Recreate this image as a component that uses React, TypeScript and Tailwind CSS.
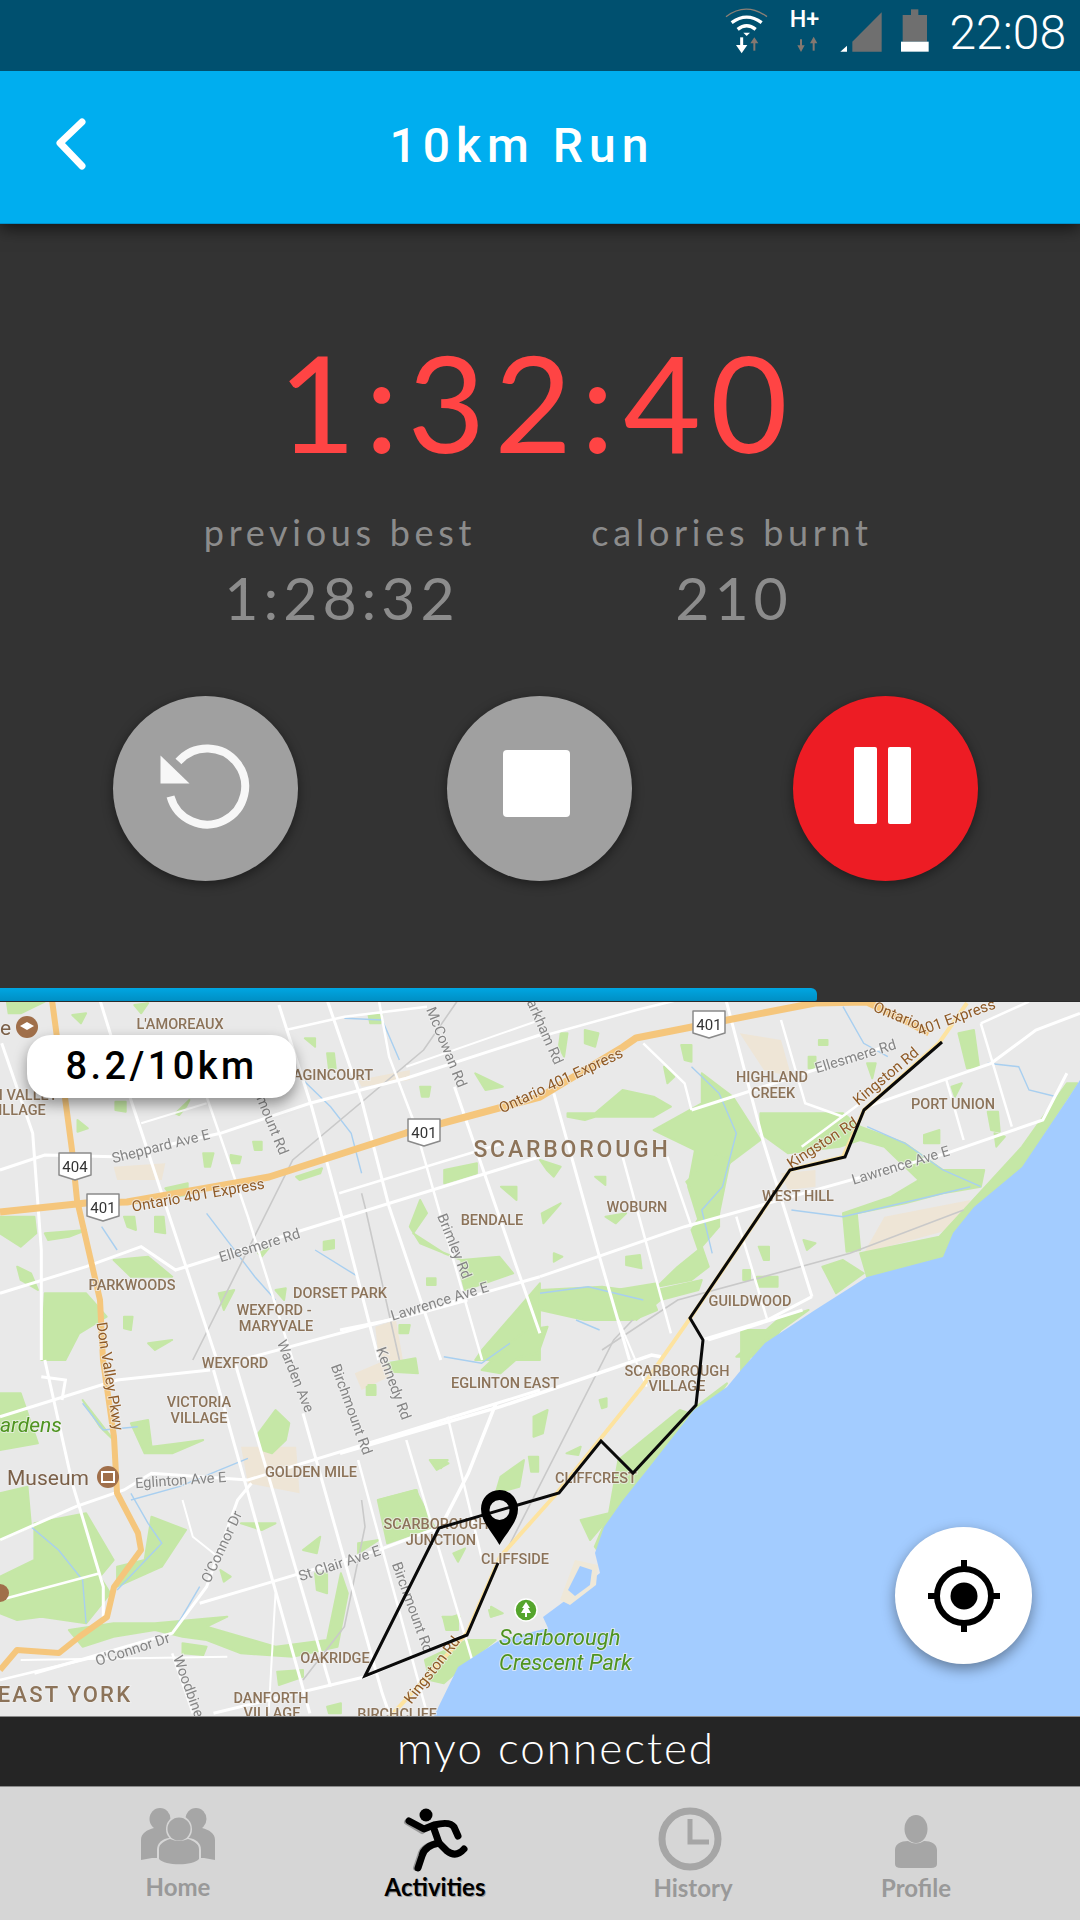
import React from "react";

type P = [number, number];
type Z = { ox: number; oy: number; sx: number };
const Z4: Z = { ox: 0, oy: 1000, sx: 2.904 };
const Z5: Z = { ox: 340, oy: 1300, sx: 2.119 };
const Z6: Z = { ox: 0, oy: 1360, sx: 2.904 };
const Z7: Z = { ox: 540, oy: 1000, sx: 2.904 };
const pts = (z: Z, a: P[]) => a.map(([x, y]) => `${(z.ox + x / z.sx).toFixed(1)},${(z.oy + y / 3).toFixed(1)}`).join(" ");

const greens: [Z, P[]][] = ([
  [Z4, [[20,5],[130,5],[60,40],[25,40]]],
  [Z4, [[210,45],[250,40],[235,70]]],
  [Z4, [[390,15],[430,10],[410,40]]],
  [Z4, [[885,115],[915,115],[915,140]]],
  [Z4, [[950,160],[970,160],[975,205],[955,205]]],
  [Z4, [[1070,45],[1110,45],[1105,70],[1075,70]]],
  [Z4, [[335,305],[365,305],[365,335],[335,330]]],
  [Z4, [[510,340],[550,300],[540,320],[520,345]]],
  [Z4, [[225,360],[255,385],[225,395]]],
  [Z4, [[590,460],[620,460],[610,500],[595,500]]],
  [Z4, [[670,465],[700,470],[695,490],[670,490]]],
  [Z4, [[735,425],[760,425],[760,450],[740,450]]],
  [Z4, [[860,530],[935,505],[930,520],[870,540]]],
  [Z4, [[480,565],[545,550],[545,585],[500,590]]],
  [Z4, [[360,650],[390,650],[395,690],[370,680]]],
  [Z4, [[450,650],[475,650],[480,700],[450,695]]],
  [Z4, [[1290,510],[1385,490],[1385,520],[1290,550]]],
  [Z4, [[1220,260],[1250,260],[1245,290],[1225,290]]],
  [Z4, [[1380,220],[1460,260],[1410,270]]],
  [Z4, [[1455,560],[1500,560],[1500,600]]],
  [Z4, [[940,725],[970,720],[970,745],[940,750]]],
  [Z4, [[750,760],[780,745],[760,770]]],
  [Z4, [[1240,835],[1265,835],[1265,855],[1240,855]]],
  [Z4, [[1340,780],[1450,770],[1490,820],[1350,870],[1340,830]]],
  [Z4, [[1220,600],[1240,640],[1200,700],[1290,760],[1340,780],[1220,730],[1190,680]]],
  [Z4, [[0,650],[100,650],[105,700],[60,740],[0,700]]],
  [Z4, [[130,700],[250,690],[200,710],[140,720]]],
  [Z4, [[50,800],[90,820],[110,870],[60,840]]],
  [Z4, [[130,880],[250,880],[310,950],[230,1000],[190,1080],[120,1080]]],
  [Z4, [[360,950],[385,950],[380,990],[360,985]]],
  [Z4, [[430,1030],[500,1020],[450,1050]]],
  [Z4, [[635,880],[680,870],[650,930]]],
  [Z4, [[800,870],[830,865],[825,900]]],
  [Z4, [[330,780],[430,770],[500,830],[380,830]]],
  [Z4, [[1160,975],[1190,975],[1185,1000],[1160,1000]]],
  [Z4, [[1400,1050],[1568,850],[1568,1080],[1380,1080]]],
  [Z7, [[0,870],[180,860],[320,880],[340,930],[270,960],[130,960],[0,930]]],
  [Z7, [[470,220],[560,290],[640,420],[550,490],[520,640],[460,660],[430,560],[450,450],[330,390],[470,310]]],
  [Z7, [[130,90],[170,100],[160,140],[130,130]]],
  [Z7, [[60,100],[80,100],[70,170],[55,140]]],
  [Z7, [[410,135],[440,135],[440,185],[420,180]]],
  [Z7, [[360,200],[390,230],[370,250]]],
  [Z7, [[80,340],[160,340],[240,270],[330,290],[380,320],[330,350],[160,350],[130,360],[80,350]]],
  [Z7, [[190,650],[250,640],[220,670]]],
  [Z7, [[5,640],[60,610],[10,670]]],
  [Z7, [[0,480],[60,500],[40,530],[20,510]]],
  [Z7, [[160,530],[190,530],[190,555]]],
  [Z7, [[810,120],[835,120],[835,135],[810,135]]],
  [Z7, [[780,170],[800,170],[800,205],[780,205]]],
  [Z7, [[950,190],[975,190],[965,235]]],
  [Z7, [[1215,100],[1260,90],[1275,200],[1240,205]]],
  [Z7, [[1300,335],[1330,335],[1335,395],[1310,390]]],
  [Z7, [[1195,260],[1225,250],[1205,290]]],
  [Z7, [[1320,400],[1350,410],[1325,440]]],
  [Z7, [[1115,405],[1160,390],[1160,430],[1115,430]]],
  [Z7, [[640,340],[880,340],[930,380],[1060,430],[1170,510],[1290,510],[1280,560],[1170,580],[1060,610],[920,640],[930,750],[890,755],[880,640],[1020,590],[1100,540],[1000,440],[930,420],[870,440],[720,460],[640,400]]],
  [Z7, [[930,760],[1160,710],[1240,620],[1400,440],[1530,250],[1560,250],[1400,500],[1260,620],[1200,700],[1170,770],[950,830]]],
  [Z7, [[570,1070],[690,960],[780,930],[700,990],[640,1070]]],
  [Z7, [[220,870],[340,850],[350,900],[280,960],[230,930]]],
  [Z7, [[340,870],[470,840],[460,870],[350,900]]],
  [Z7, [[590,810],[610,810],[610,840],[590,840]]],
  [Z7, [[630,830],[690,830],[690,860],[630,860]]],
  [Z7, [[635,740],[665,740],[665,780],[650,780]]],
  [Z7, [[765,720],[800,730],[775,750]]],
  [Z7, [[250,770],[290,765],[295,805],[250,795]]],
  [Z7, [[40,760],[65,770],[40,785]]],
  [Z7, [[425,545],[520,460],[555,480],[520,560],[520,680],[470,740],[490,800],[440,840],[340,860],[400,800],[460,750],[440,690],[470,640],[450,590]]],
  [Z7, [[820,800],[880,780],[940,820],[860,880]]],
  [Z5, [[850,90],[920,90],[870,170],[850,220]]],
  [Z5, [[745,330],[820,250],[790,310],[740,350]]],
  [Z5, [[395,90],[440,80],[420,160],[380,170],[340,220],[300,210],[360,130]]],
  [Z5, [[410,350],[440,330],[430,400],[410,410]]],
  [Z5, [[340,530],[390,480],[380,560],[330,580]]],
  [Z5, [[80,600],[160,570],[200,680],[100,730]]],
  [Z5, [[510,660],[570,640],[560,670],[530,720]]],
  [Z5, [[220,960],[250,945],[250,990],[225,990]]],
  [Z5, [[190,480],[230,490],[205,510]]],
  [Z5, [[400,470],[420,470],[420,515],[405,515]]],
  [Z5, [[480,460],[510,440],[505,465]]],
  [Z5, [[60,255],[75,255],[75,285],[60,285]]],
  [Z5, [[100,190],[160,175],[165,220],[110,215]]],
  [Z5, [[550,300],[565,295],[565,320],[555,325]]],
  [Z5, [[240,760],[265,745],[250,785]]],
  [Z5, [[320,920],[345,940],[320,950]]],
  [Z5, [[180,1080],[270,1020],[330,1020],[260,1100],[220,1150],[190,1140]]],
  [Z5, [[590,480],[720,330],[750,345],[650,510],[600,620],[550,760],[540,740],[570,640]]],
  [Z6, [[380,190],[430,180],[440,260],[520,250],[590,240],[500,280],[420,280]]],
  [Z6, [[750,220],[800,150],[840,190],[830,240],[790,280],[760,270]]],
  [Z6, [[100,490],[250,460],[330,600],[290,650],[320,700],[250,790],[120,770],[50,780],[0,760],[0,650],[100,600]]],
  [Z6, [[0,400],[80,380],[90,500],[0,540]]],
  [Z6, [[440,470],[540,510],[470,620],[340,680],[340,620],[420,600]]],
  [Z6, [[200,810],[330,790],[450,790],[660,770],[600,800],[700,830],[800,860],[950,840],[990,640],[1010,700],[980,860],[850,890],[700,880],[600,840],[530,830],[450,810],[330,830],[240,860]]],
  [Z6, [[530,850],[600,860],[590,885],[530,880]]],
  [Z6, [[805,935],[880,930],[880,950],[810,975]]],
  [Z6, [[1100,420],[1210,390],[1230,490],[1130,540]]],
  [Z6, [[880,570],[930,530],[920,580]]],
  [Z6, [[1040,550],[1100,540],[1040,580]]],
  [Z6, [[915,640],[950,640],[950,700],[920,690]]],
  [Z6, [[1285,770],[1335,770],[1300,805]]],
  [Z6, [[1250,300],[1300,300],[1280,325]]],
  [Z6, [[950,1040],[990,1030],[990,1060],[955,1060]]],
  [Z6, [[1065,80],[1090,80],[1090,105],[1065,105]]],
  [Z6, [[1420,750],[1455,760],[1425,770]]],
  [Z6, [[0,100],[60,100],[110,250],[0,270]]],
  [Z6, [[240,120],[330,240],[290,200]]],
  [Z6, [[640,630],[670,650],[650,665]]],
  [Z6, [[700,490],[800,490],[760,510]]],
] as [Z, P[]][]);

const tans: [Z, P[]][] = [
  [Z4, [[330,500],[480,490],[470,540],[340,540]]],
  [Z6, [[700,260],[860,260],[870,400],[720,370]]],
  [Z7, [[580,100],[700,120],[730,230],[650,210]]],
  [Z7, [[700,520],[800,510],[800,560],[720,570]]],
  [Z4, [[1040,240],[1190,210],[1190,240],[1050,260]]],
  [Z4, [[1090,980],[1150,960],[1170,1080],[1100,1080]]],
  [Z6, [[1030,40],[1120,0],[1130,50],[1050,90]]],
  [Z7, [[1000,650],[1250,600],[1220,680],[940,760]]],
];

const roads: [Z, P[], number][] = [
  [Z4, [[290,0],[380,300],[540,800],[630,1080]], 3],
  [Z4, [[600,290],[720,650],[850,1080]], 2.5],
  [Z4, [[810,15],[905,320],[990,640],[1100,1080]], 3],
  [Z4, [[950,0],[1050,300],[1130,620],[1280,1080]], 3],
  [Z4, [[1100,0],[1130,170],[1200,360],[1400,1080]], 2.5],
  [Z4, [[1320,260],[1400,500],[1500,800],[1568,1000]], 3],
  [Z4, [[5,130],[95,400],[120,750],[120,1080]], 3],
  [Z4, [[0,510],[130,465],[330,470]], 3],
  [Z4, [[330,470],[640,400],[900,310],[1180,235],[1568,105]], 3],
  [Z4, [[830,90],[1000,50],[1240,20]], 2.5],
  [Z4, [[0,880],[250,800],[410,740],[510,810],[880,690],[1568,470]], 3],
  [Z4, [[985,580],[1110,540],[1460,430]], 2.5],
  [Z4, [[700,1080],[1130,960],[1568,830]], 3],
  [Z4, [[410,370],[600,310]], 2],
  [Z4, [[1180,200],[1568,60]], 2],
  [Z6, [[0,170],[340,60],[610,30]], 3],
  [Z6, [[0,540],[220,440],[360,390],[440,340],[720,360],[1100,240],[1568,90]], 3],
  [Z6, [[580,730],[1100,570],[1280,500]], 3],
  [Z6, [[100,940],[500,820],[600,680],[690,420],[730,370]], 3],
  [Z6, [[0,960],[280,890]], 2.5],
  [Z6, [[60,900],[660,890]], 2],
  [Z6, [[620,1060],[1060,950],[1360,820]], 3],
  [Z6, [[0,720],[290,640]], 2.5],
  [Z6, [[130,0],[210,370],[300,680],[300,780]], 3],
  [Z6, [[620,30],[900,1060]], 3],
  [Z6, [[680,0],[960,980]], 3],
  [Z6, [[880,160],[1110,1000],[1130,1060]], 3],
  [Z6, [[1040,300],[1240,1060]], 2.5],
  [Z6, [[1180,240],[1400,1000]], 2.5],
  [Z6, [[1300,170],[1400,600]], 2.5],
  [Z6, [[1440,130],[1360,340],[1280,500]], 3.5],
  [Z6, [[530,420],[560,530],[620,580],[640,600]], 2],
  [Z6, [[500,880],[560,1060]], 2.5],
  [Z6, [[800,700],[780,1060]], 2],
  [Z6, [[120,50],[190,60],[180,120]], 3],
  [Z7, [[40,280],[170,760],[260,1080]], 3],
  [Z7, [[240,470],[380,1000]], 2.5],
  [Z7, [[370,470],[440,680]], 2.5],
  [Z7, [[540,0],[650,430],[790,890]], 3],
  [Z7, [[700,60],[770,310],[880,350]], 2.5],
  [Z7, [[1180,240],[1230,420]], 2.5],
  [Z7, [[1280,70],[1370,380]], 2.5],
  [Z7, [[570,650],[660,960]], 2.5],
  [Z7, [[0,830],[420,680],[1180,460],[1460,360],[1530,220]], 3],
  [Z7, [[440,330],[620,270],[1030,130]], 3],
  [Z7, [[0,110],[280,30],[400,0]], 2.5],
  [Z7, [[760,440],[930,310]], 2.5],
  [Z7, [[950,320],[1310,190],[1440,90],[1568,40]], 3],
  [Z7, [[300,130],[420,250],[440,330]], 2.5],
  [Z7, [[470,1020],[660,960],[790,890]], 3],
  [Z7, [[1280,70],[1420,5]], 2.5],
  [Z5, [[0,460],[340,320],[660,165],[680,170]], 3.5],
  [Z5, [[780,120],[980,30]], 3],
  [Z5, [[590,60],[650,260]], 2],
  [Z5, [[0,90],[140,50],[270,0]], 3],
];

const rails: [Z, P[]][] = [
  [Z4, [[1050,580],[1060,620],[1160,1080]]],
  [Z4, [[1330,0],[1230,150],[850,480],[560,1080]]],
  [Z7, [[180,1050],[400,900],[900,760],[1230,630]]],
  [Z6, [[1050,420],[1060,500],[1000,800],[880,960]]],
  [Z5, [[350,760],[580,120],[620,60]]],
];

const creeks: [Z, P[]][] = [
  [Z4, [[880,240],[960,320],[1020,400],[1050,520]]],
  [Z4, [[295,680],[340,750]]],
  [Z4, [[600,640],[740,830],[800,900]]],
  [Z4, [[915,750],[1040,830]]],
  [Z4, [[1000,55],[1110,60],[1160,180]]],
  [Z7, [[950,380],[1060,430],[1170,510],[1280,560]]],
  [Z7, [[440,200],[520,280],[570,400],[530,560],[470,630],[500,760]]],
  [Z7, [[1300,190],[1390,200],[1420,270],[1500,290]]],
  [Z7, [[730,630],[880,650],[1130,590],[1250,560]]],
  [Z7, [[880,20],[940,130],[1010,170]]],
  [Z7, [[0,880],[140,860],[300,900]]],
  [Z6, [[90,500],[170,570],[240,660],[250,790]]],
  [Z6, [[380,400],[430,490],[470,550],[340,690]]],
  [Z6, [[380,420],[520,380],[720,295]]],
  [Z6, [[500,820],[580,680]]],
  [Z6, [[240,130],[300,210],[400,200]]],
  [Z5, [[220,170],[300,190],[360,130]]],
  [Z5, [[500,60],[550,90]]],
];

const coast = "1080,1080 1067,1100 1022,1167 974,1207 953,1233 943,1257 867,1277 815,1310 765,1343 741,1370 727,1387 694,1410 647,1470 623,1500 604,1527 595,1553 600,1573 566,1600 543,1617 548,1628 500,1640 458,1667 434,1716 1080,1716";

type L = [string, number, number, number?];
const places: L[] = [
  ["L'AMOREAUX", 180, 1029], ["AGINCOURT", 333, 1080], ["N VALLEY", 25, 1100], ["ILLAGE", 22, 1115],
  ["BENDALE", 492, 1225], ["WOBURN", 637, 1212], ["HIGHLAND", 772, 1082], ["CREEK", 773, 1098],
  ["PORT UNION", 953, 1109], ["WEST HILL", 798, 1201], ["GUILDWOOD", 750, 1306], ["PARKWOODS", 132, 1290],
  ["DORSET PARK", 340, 1298], ["WEXFORD -", 274, 1315], ["MARYVALE", 276, 1331], ["WEXFORD", 235, 1368],
  ["VICTORIA", 199, 1407], ["VILLAGE", 199, 1423], ["EGLINTON EAST", 505, 1388], ["SCARBOROUGH", 677, 1376],
  ["VILLAGE", 677, 1391], ["GOLDEN MILE", 311, 1477], ["CLIFFCREST", 596, 1483], ["SCARBOROUGH", 436, 1529],
  ["JUNCTION", 441, 1545], ["CLIFFSIDE", 515, 1564], ["OAKRIDGE", 335, 1663], ["DANFORTH", 271, 1703],
  ["VILLAGE", 272, 1718], ["BIRCHCLIFF", 397, 1719],
];
const grey: L[] = [
  ["Sheppard Ave E", 162, 1151, -14], ["McCowan Rd", 442, 1049, 68], ["Markham Rd", 538, 1028, 66],
  ["mount Rd", 268, 1127, 68], ["Ellesmere Rd", 261, 1250, -17], ["Brimley Rd", 450, 1248, 68],
  ["Lawrence Ave E", 441, 1306, -17], ["Ellesmere Rd", 857, 1061, -17], ["Lawrence Ave E", 902, 1170, -17],
  ["Warden Ave", 291, 1378, 68], ["Birchmount Rd", 347, 1411, 70], ["Kennedy Rd", 389, 1385, 70],
  ["Eglinton Ave E", 181, 1485, -4], ["O'Connor Dr", 226, 1549, -65], ["O'Connor Dr", 134, 1654, -18],
  ["Woodbine", 184, 1688, 70], ["St Clair Ave E", 341, 1568, -18], ["Birchmount Rd", 408, 1609, 70],
];
const brownRoad: L[] = [
  ["Ontario 401 Express", 199, 1200, -10], ["Ontario 401 Express", 563, 1085, -25], ["Don Valley Pkwy", 105, 1377, 81],
  ["Kingston Rd", 436, 1673, -52], ["Kingston Rd", 889, 1080, -40], ["Kingston Rd", 825, 1147, -33],
  ["Ontario", 895, 1020, 22], ["401 Express", 958, 1022, -20],
];
const shields: [string, number, number][] = [["401", 424, 1132], ["401", 103, 1207], ["404", 75, 1166], ["401", 709, 1024]];

function MapArt() {
  return (
    <svg className="block w-[1080px] h-[714px]" viewBox="0 1002 1080 714">
      <rect x="0" y="1002" width="1080" height="714" fill="#e9e9e9" />
      <g className="blur-[0.5px]">
        {tans.map(([z, a], i) => <polygon key={i} points={pts(z, a)} fill="#eee5d6" />)}
        {greens.map(([z, a], i) => <polygon key={i} points={pts(z, a)} fill="#c5e7a6" stroke="#c5e7a6" strokeWidth="2" strokeLinejoin="round" />)}
        {creeks.map(([z, a], i) => <polyline key={i} points={pts(z, a)} fill="none" stroke="#a8cff0" strokeWidth="1.4" />)}
        {rails.map(([z, a], i) => <polyline key={i} points={pts(z, a)} fill="none" stroke="#c9c9c9" strokeWidth="1.6" />)}
        {roads.map(([z, a, w], i) => <polyline key={i} points={pts(z, a)} fill="none" stroke="#ffffff" strokeWidth={w} />)}
        <polygon points={coast} fill="#a3ccff" />
        <polygon points="560,1600 575,1560 598,1565 596,1585 570,1605" fill="#efe8d8" />
        <polygon points="568,1590 580,1566 592,1570 590,1585 575,1596" fill="#a3ccff" />
        <polyline points="0,1212 86,1203 127,1202 269,1177 406,1133 499,1108 540,1097 623,1047 636,1038 712,1023 815,1003 867,1002 884,1010 929,1033" fill="none" stroke="#f5c67c" strokeWidth="7" strokeLinejoin="round" />
        <polyline points="52,1000 72,1150 77,1200 100,1300 103,1360 114,1437 117,1493 138,1533 141,1550 114,1587 107,1617 79,1637 59,1653 17,1650 0,1670" fill="none" stroke="#f5c67c" strokeWidth="6" strokeLinejoin="round" />
        <polyline points="967,1003 939,1043 864,1110 843,1157 790,1170 691,1317 642,1387 557,1493 500,1557 467,1633 387,1720" fill="none" stroke="#fde3a0" strokeWidth="4" strokeLinejoin="round" />
        {shields.map(([t, x, y], i) => (
          <g key={i}>
            <path d={`M${x - 16} ${y - 13}h32v22l-16 5l-16 -5z`} fill="#fff" stroke="#8a8a8a" strokeWidth="1.5" strokeLinejoin="round" />
            <text x={x} y={y + 6} textAnchor="middle" fontSize="15" fontFamily="Roboto, sans-serif" fill="#333">{t}</text>
          </g>
        ))}
        <g fontFamily="Roboto, sans-serif" style={{ paintOrder: "stroke" }} stroke="#f0f0f0" strokeWidth="2" strokeOpacity="0.7">
          {places.map(([t, x, y], i) => <text key={i} x={x} y={y} textAnchor="middle" fontSize="14.5" fontWeight="500" fill="#8c7359">{t}</text>)}
          <text x="572" y="1157" textAnchor="middle" fontSize="23" fontWeight="500" letterSpacing="2.8" fill="#8c7359">SCARBOROUGH</text>
          <text x="65" y="1702" textAnchor="middle" fontSize="22" fontWeight="500" letterSpacing="2.2" fill="#8c7359">EAST YORK</text>
          <text x="7" y="1485" fontSize="21" fill="#7b6048">Museum</text>
          <text x="0" y="1432" fontSize="21" fontStyle="italic" fill="#4f9420">ardens</text>
          <text x="0" y="1035" fontSize="21" fill="#7b6048">e</text>
          <text x="499" y="1645" fontSize="22" fontStyle="italic" fill="#4f9420">Scarborough</text>
          <text x="499" y="1670" fontSize="22" fontStyle="italic" fill="#4f9420">Crescent Park</text>
          {grey.map(([t, x, y, r], i) => <text key={i} x={x} y={y} transform={`rotate(${r} ${x} ${y})`} textAnchor="middle" fontSize="14.5" fill="#858585">{t}</text>)}
          {brownRoad.map(([t, x, y, r], i) => <text key={i} x={x} y={y} transform={`rotate(${r} ${x} ${y})`} textAnchor="middle" fontSize="15" fill="#8f5a26">{t}</text>)}
        </g>
        <circle cx="27" cy="1027" r="11" fill="#a06f4a" />
        <path d="M20 1026l7-4l7 4l-7 4z" fill="#fff" />
        <circle cx="108" cy="1477" r="11" fill="#a06f4a" />
        <rect x="102" y="1472" width="12" height="10" fill="none" stroke="#fff" strokeWidth="2" />
        <circle cx="0" cy="1593" r="9" fill="#a06f4a" />
        <circle cx="526" cy="1610" r="11" fill="#55a52c" stroke="#fff" strokeWidth="1.5" />
        <path d="M526 1602l4 6h-2l3 5h-4v4h-2v-4h-4l3-5h-2z" fill="#fff" />
      </g>
      <polyline
        points="942,1042 864,1110 845,1157 790,1170 690,1318 703,1340 696,1405 633,1473 601,1441 559,1493 439,1528 365,1676 467,1635 498,1563"
        fill="none" stroke="#0a0a0a" strokeWidth="3" strokeLinejoin="miter"
      />
      <path fillRule="evenodd" fill="#000" d="M499.5 1490c-10.5 0-18.500 8.500-18.500 19c0 13 12 24 18.500 36c6.500-12 18.500-23 18.500-36c0-10.500-8-19-18.500-19zM499.500 1500a10 10 0 1 1 0 20a10 10 0 1 1 0-20z" />
    </svg>
  );
}

function StatusIcons() {
  return (
    <svg className="w-[260px] h-[71px] shrink-0" viewBox="0 0 780 213">
      <path d="M135 50Q195 5 258 50" fill="none" stroke="#8c8076" strokeWidth="4" />
      <path d="M152 68Q197 35 242 68" fill="none" stroke="#fff" strokeWidth="10" />
      <path d="M170 88Q197 66 224 88" fill="none" stroke="#fff" strokeWidth="10" />
      <polygon points="187,98 207,98 197,108" fill="#fff" />
      <path d="M182 112V140" stroke="#fff" strokeWidth="9" />
      <polygon points="165,135 199,135 182,160" fill="#fff" />
      <path d="M220 125V152" stroke="#857870" strokeWidth="6" />
      <polygon points="208,130 232,130 220,112" fill="#857870" />
      <text x="326" y="82" fontSize="70" fontWeight="500" fontFamily="Roboto, sans-serif" fill="#fff">H+</text>
      <path d="M360 118V145" stroke="#857870" strokeWidth="6" />
      <polygon points="349,136 371,136 360,156" fill="#857870" />
      <path d="M398 122V152" stroke="#857870" strokeWidth="6" />
      <polygon points="387,130 409,130 398,110" fill="#857870" />
      <polygon points="478,155 498,155 498,137" fill="#fff" />
      <polygon points="514,155 514,125 602,37 602,155" fill="#6f6f6f" />
      <rect x="690" y="28" width="22" height="18" fill="#6f6f6f" />
      <rect x="665" y="45" width="73" height="80" fill="#6f6f6f" />
      <rect x="660" y="125" width="83" height="30" fill="#fff" />
    </svg>
  );
}

function HomeIcon() {
  return (
    <svg className="w-[74px] h-[60px]" viewBox="141 1807 74 60">
      <g fill="#a6a6a6">
        <ellipse cx="160" cy="1819" rx="10.500" ry="11" />
        <ellipse cx="196" cy="1819" rx="10.500" ry="11" />
        <path d="M141 1860v-20c0-7 6-10 13-12l18 0v30h-20z" />
        <path d="M215 1860v-20c0-7-6-10-13-12l-18 0v30h20z" />
      </g>
      <ellipse cx="179" cy="1829" rx="13" ry="13.500" fill="#d6d6d6" />
      <path d="M157 1870v-20c0-7 5-11 12-12h20c7 1 12 5 12 12v20z" fill="#d6d6d6" />
      <ellipse cx="179" cy="1829" rx="11.500" ry="11.500" fill="#a6a6a6" />
      <path d="M159 1859v-10c0-5 5-8 11-10q9 4 18 0c6 2 11 5 11 10v10c-6 7-34 7-40 0z" fill="#a6a6a6" />
    </svg>
  );
}

function Runner() {
  return (
    <svg className="w-[66px] h-[66px]" viewBox="404 1807 66 66">
      <g fill="none" stroke="#9a9a9a" strokeWidth="6" strokeLinecap="round" strokeLinejoin="round">
        <path d="M409 1822L424 1831" />
        <path d="M439 1843Q424 1846 422 1856L418 1868" />
      </g>
      <circle cx="428" cy="1815" r="6.500" fill="#000" />
      <g fill="none" stroke="#000" strokeWidth="7" strokeLinecap="round" strokeLinejoin="round">
        <path d="M411 1821L426 1829L436 1825Q452 1821 456 1827L460 1836" />
        <path d="M435 1826L441 1843L449 1851Q458 1858 466 1849" />
        <path d="M441 1843Q426 1846 424 1856L420 1868" />
      </g>
    </svg>
  );
}

function ClockIcon() {
  return (
    <svg className="w-[64px] h-[64px] -translate-x-[3px]" viewBox="0 0 64 64">
      <circle cx="32" cy="32" r="28" fill="none" stroke="#a6a6a6" strokeWidth="7" />
      <path d="M32 12V35H51" fill="none" stroke="#a6a6a6" strokeWidth="5" />
    </svg>
  );
}

function ProfileIcon() {
  return (
    <svg className="w-[42px] h-[54px]" viewBox="893 1815 42 54">
      <ellipse cx="914" cy="1829" rx="11.500" ry="14" fill="#a6a6a6" />
      <path d="M893 1864v-14c0-6 6-9 13-9q8 5 16 0c7 0 13 3 13 9v14q0 4-6 4h-30q-6 0-6-4z" fill="#a6a6a6" />
    </svg>
  );
}

const navItem = "flex flex-col items-center shrink-0";
const circle = "w-[185px] h-[185px] rounded-full shadow-[0_3px_12px_rgba(0,0,0,0.45)] flex items-center justify-center";

export default function App() {
  return (
    <div className="w-[1080px] h-[1920px] flex flex-col overflow-hidden bg-[#333333] font-['Lato',sans-serif]">
      <div className="relative z-20 h-[71px] shrink-0 bg-[#00506f] flex items-center justify-end pr-[14px]">
        <StatusIcons />
        <span className="ml-[8px] mb-[5px] text-[48px] leading-none font-light text-white font-['Roboto',sans-serif]">22:08</span>
      </div>
      <div className="relative z-10 h-[153px] shrink-0 bg-[#00aeef] border-b border-[#0090cc] flex items-center shadow-[0_4px_16px_rgba(0,0,0,0.65)]">
        <svg className="absolute left-[55px] top-[46px] w-[34px] h-[54px]" viewBox="0 0 34 54">
          <path d="M27 5L5 26L27 49" fill="none" stroke="#fff" strokeWidth="7" strokeLinecap="round" strokeLinejoin="round" />
        </svg>
        <h1 className="w-full text-center pr-[36px] pb-[2px] text-white text-[48px] font-medium tracking-[6px] font-['Roboto',sans-serif]">10km Run</h1>
      </div>

      <div className="h-[764px] shrink-0 flex flex-col items-stretch">
        <div className="mt-[103px] pr-[5px] text-center text-[134px] leading-[150px] font-normal tracking-[9px] text-[#ff4444]">1:32:40</div>
        <div className="mt-[32px] flex pl-[196px] text-[#8c8c8c]">
          <div className="w-[288px] flex flex-col items-center">
            <span className="text-[36px] leading-[46px] font-normal tracking-[4.7px] whitespace-nowrap">previous best</span>
            <span className="mt-[8px] pl-[4px] text-[59px] leading-[70px] font-normal tracking-[5px]">1:28:32</span>
          </div>
          <div className="ml-[104px] w-[288px] flex flex-col items-center">
            <span className="text-[36px] leading-[46px] font-normal tracking-[4.7px] whitespace-nowrap">calories burnt</span>
            <span className="mt-[8px] pl-[4px] text-[59px] leading-[70px] font-normal tracking-[5px]">210</span>
          </div>
        </div>
        <div className="mt-[63px] flex pl-[113px]">
          <div className={`${circle} bg-[#a0a0a0]`}>
            <svg className="w-[100px] h-[100px]" viewBox="155.5 738.5 100 100">
              <path d="M170 796A38 38 0 1 0 178 761" fill="none" stroke="#f7f7f7" strokeWidth="8" />
              <polygon points="160,755 160,783 189,783" fill="#f7f7f7" />
            </svg>
          </div>
          <div className={`${circle} ml-[149px] bg-[#a0a0a0]`}>
            <div className="w-[67px] h-[67px] rounded-[4px] bg-white -translate-x-[3px] -translate-y-[5px]" />
          </div>
          <div className={`${circle} ml-[161px] bg-[#ed1c24] gap-[11px]`}>
            <div className="w-[23px] h-[77px] rounded-[2px] bg-white -translate-x-[3px] -translate-y-[3px]" />
            <div className="w-[23px] h-[77px] rounded-[2px] bg-white -translate-x-[3px] -translate-y-[3px]" />
          </div>
        </div>
      </div>

      <div className="h-[13px] w-[817px] shrink-0 rounded-tr-[6px] rounded-br-[2px] bg-gradient-to-b from-[#00a6e2] to-[#008fc4]" />
      <div className="h-px shrink-0 bg-[#2b2b2b]" />

      <div className="relative h-[714px] shrink-0 overflow-hidden">
        <MapArt />
        <div className="absolute left-[27px] top-[33px] w-[269px] h-[63px] rounded-[24px] bg-white shadow-[0_6px_14px_rgba(0,0,0,0.4)] flex items-center justify-center">
          <span className="text-[38px] font-medium tracking-[3.4px] text-black font-['Roboto',sans-serif]">8.2/10km</span>
        </div>
        <div className="absolute left-[895px] top-[525px] w-[137px] h-[137px] rounded-full bg-white shadow-[0_5px_14px_rgba(0,0,0,0.4)] flex items-center justify-center">
          <svg className="w-[76px] h-[76px]" viewBox="0 0 76 76">
            <circle cx="38" cy="38" r="27" fill="none" stroke="#000" strokeWidth="6" />
            <circle cx="38" cy="38" r="13.500" fill="#000" />
            <path d="M38 2V12M38 64V74M2 38H12M64 38H74" stroke="#000" strokeWidth="6" />
          </svg>
        </div>
      </div>

      <div className="h-[71px] shrink-0 bg-[#252525] border-y border-[#8a8a8a] flex items-center justify-center pl-[32px] pb-[9px]">
        <span className="text-[44px] leading-none font-light tracking-[2px] text-white">myo connected</span>
      </div>

      <nav className="h-[133px] shrink-0 bg-[#d6d6d6] flex font-['Lato',sans-serif]">
        <div className={`${navItem} w-[356px] pt-[20px]`}>
          <HomeIcon />
          <span className="mt-[5px] text-[24px] leading-[30px] font-bold text-[#999999]">Home</span>
        </div>
        <div className={`${navItem} w-[158px] pt-[20px]`}>
          <Runner />
          <span className="-mt-[1px] text-[24px] leading-[30px] font-bold text-black [text-shadow:1px_1px_0_#9a9a9a]">Activities</span>
        </div>
        <div className={`${navItem} w-[358px] pt-[20px]`}>
          <ClockIcon />
          <span className="mt-[2px] text-[24px] leading-[30px] font-bold text-[#999999]">History</span>
        </div>
        <div className={`${navItem} w-[88px] pt-[28px]`}>
          <ProfileIcon />
          <span className="mt-[4px] text-[24px] leading-[30px] font-bold text-[#999999]">Profile</span>
        </div>
      </nav>
    </div>
  );
}
